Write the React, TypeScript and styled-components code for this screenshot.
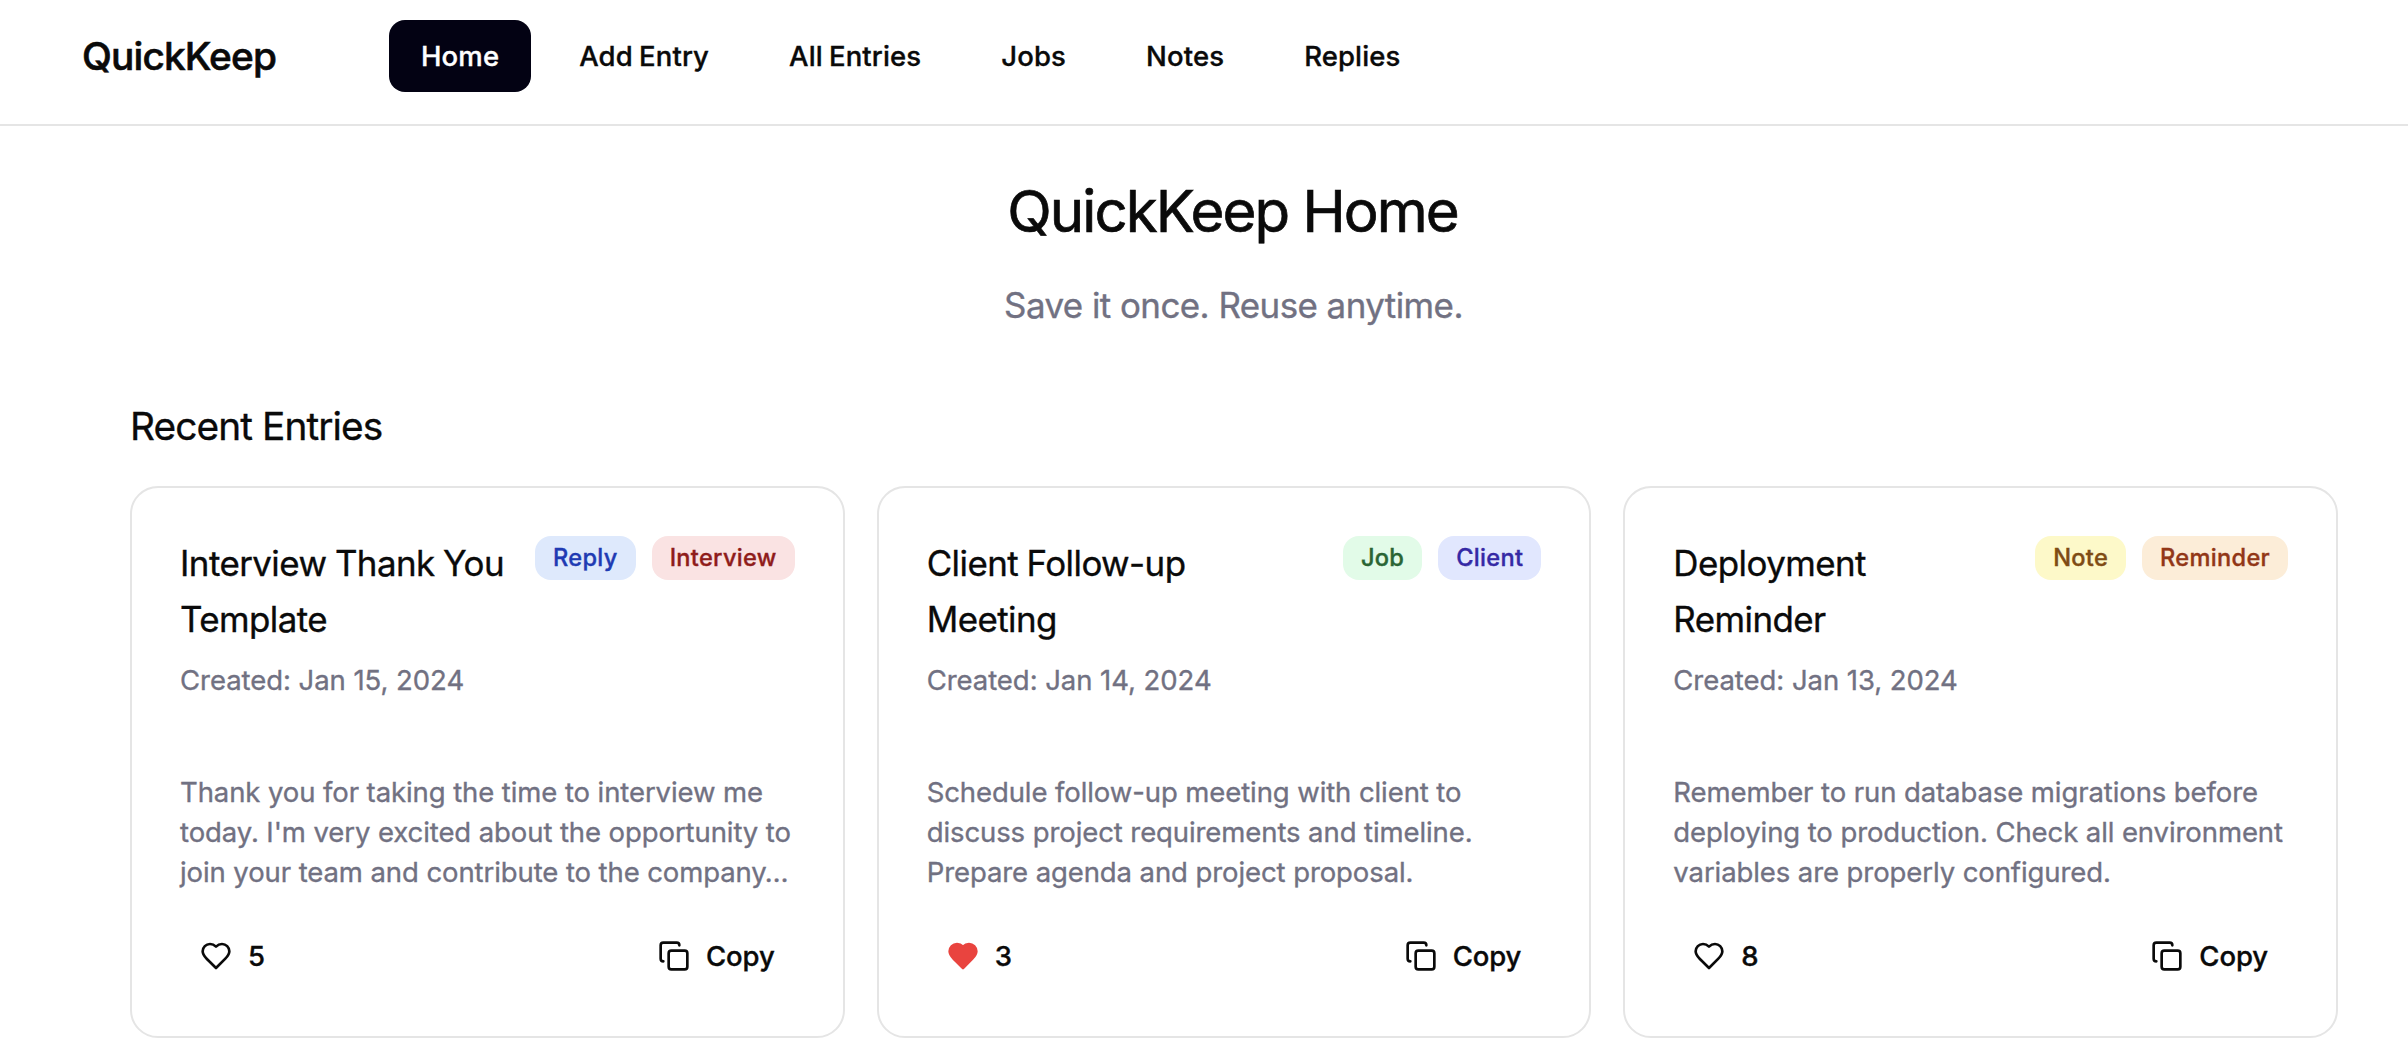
import React from "react";
import styled, { createGlobalStyle } from "styled-components";
import { Copy } from "lucide-react";

const GlobalStyle = createGlobalStyle`
  *, *::before, *::after { box-sizing: border-box; }
  body {
    margin: 0;
    background: #ffffff;
    color: #0a0a0a;
    font-family: Inter, "Liberation Sans", sans-serif;
    font-weight: 400;
    -webkit-text-stroke: 0.35px currentColor;
  }
  h1, h2, h3, p { margin: 0; font-weight: 400; }
  button { font: inherit; color: inherit; border: 0; cursor: pointer; }
`;

const Header = styled.header`
  display: grid;
  grid-template-columns: 307px 1fr;
  align-items: start;
  height: 126px;
  padding: 20px 82px 0;
  border-bottom: 2px solid #e5e5e5;
`;

const Brand = styled.div`
  font-size: 38.8px;
  font-weight: 500;
  line-height: 60px;
  letter-spacing: -0.85px;
  padding-top: 6px;
  -webkit-text-stroke-width: 0.6px;
`;

const Nav = styled.nav`
  display: flex;
  gap: 16px;
`;

const NavButton = styled.button<{ $active?: boolean }>`
  height: 72px;
  padding: 0 32px;
  border-radius: 16px;
  background: ${(p) => (p.$active ? "#030213" : "transparent")};
  color: ${(p) => (p.$active ? "#ffffff" : "#0a0a0a")};
  font-size: 27.5px;
  font-weight: 500;
  line-height: 40px;
  letter-spacing: 0.13px;
  word-spacing: -1.3px;
  white-space: nowrap;
`;

const Main = styled.main`
  padding: 40px 70px 0 130px;
`;

const Hero = styled.section`
  text-align: center;
`;

const PageTitle = styled.h1`
  padding-right: 3px;
  font-size: 58.2px;
  line-height: 90px;
  letter-spacing: -1.95px;
  -webkit-text-stroke-width: 0.7px;
`;

const Tagline = styled.p`
  margin-top: 21px;
  padding-right: 1px;
  font-size: 34.92px;
  line-height: 56px;
  letter-spacing: -0.55px;
  color: #717182;
`;

const SectionTitle = styled.h2`
  margin: 63px 0 30px;
  font-size: 38.8px;
  line-height: 60px;
  letter-spacing: -0.9px;
`;

const Grid = styled.div`
  display: grid;
  grid-template-columns: repeat(3, minmax(0, 1fr));
  gap: 32px;
`;

const Card = styled.article`
  display: flex;
  flex-direction: column;
  height: 552px;
  padding: 48px;
  border: 2px solid #e5e5e5;
  border-radius: 28px;
`;

const CardTop = styled.div`
  display: flex;
  align-items: flex-start;
  gap: 24px;
`;

const CardTitle = styled.h3`
  flex: 1;
  min-width: 0;
  margin-top: -1px;
  font-size: 34.92px;
  line-height: 56px;
  letter-spacing: -0.56px;
  word-spacing: -0.8px;
`;

const Tags = styled.div`
  display: flex;
  flex-shrink: 0;
  gap: 16px;
`;

const Tag = styled.span<{ $bg: string; $fg: string }>`
  height: 44px;
  padding: 6px 18px;
  border-radius: 16px;
  background: ${(p) => p.$bg};
  color: ${(p) => p.$fg};
  font-size: 23.6px;
  font-weight: 500;
  line-height: 32px;
  letter-spacing: 0.3px;
`;

const Created = styled.p`
  margin-top: 13px;
  font-size: 27.5px;
  line-height: 40px;
  letter-spacing: -0.05px;
  color: #717182;
`;

const Body = styled.p`
  margin-top: 72px;
  font-size: 27.5px;
  line-height: 40px;
  letter-spacing: -0.09px;
  color: #717182;
`;

const Actions = styled.div`
  display: flex;
  justify-content: space-between;
  margin-top: auto;
`;

const ActionButton = styled.button`
  display: inline-flex;
  align-items: center;
  gap: 16px;
  height: 64px;
  padding: 0 20px;
  border-radius: 16px;
  background: transparent;
  font-size: 27.5px;
  font-weight: 500;
  line-height: 40px;
  letter-spacing: -0.1px;
`;

const HeartSvg = styled.svg<{ $liked: boolean }>`
  width: 32px;
  height: 32px;
  fill: ${(p) => (p.$liked ? "#e9443f" : "none")};
  stroke: ${(p) => (p.$liked ? "#e9443f" : "currentColor")};
  stroke-width: 2;
  stroke-linecap: round;
  stroke-linejoin: round;
`;

const Heart = ({ liked }: { liked: boolean }) => (
  <HeartSvg viewBox="0 0 24 24" $liked={liked}>
    <path d="M19 14c1.49-1.46 3-3.21 3-5.5A5.5 5.5 0 0 0 16.5 3c-1.76 0-3 .5-4.5 2-1.5-1.5-2.74-2-4.5-2A5.5 5.5 0 0 0 2 8.5c0 2.3 1.5 4.05 3 5.5l7 7Z" />
  </HeartSvg>
);

const navItems = ["Home", "Add Entry", "All Entries", "Jobs", "Notes", "Replies"];

const entries = [
  {
    title: "Interview Thank You Template",
    created: "Jan 15, 2024",
    body: "Thank you for taking the time to interview me today. I'm very excited about the opportunity to join your team and contribute to the company…",
    likes: 5,
    liked: false,
    tags: [
      { label: "Reply", bg: "#dee9fc", fg: "#1f3bb3" },
      { label: "Interview", bg: "#fae3e3", fg: "#8f1c1b" },
    ],
  },
  {
    title: "Client Follow-up Meeting",
    created: "Jan 14, 2024",
    body: "Schedule follow-up meeting with client to discuss project requirements and timeline. Prepare agenda and project proposal.",
    likes: 3,
    liked: true,
    tags: [
      { label: "Job", bg: "#e2fbe8", fg: "#2a6534" },
      { label: "Client", bg: "#e1e7fe", fg: "#3529a5" },
    ],
  },
  {
    title: "Deployment Reminder",
    created: "Jan 13, 2024",
    body: "Remember to run database migrations before deploying to production. Check all environment variables are properly configured.",
    likes: 8,
    liked: false,
    tags: [
      { label: "Note", bg: "#fdf9c9", fg: "#7f4c14" },
      { label: "Reminder", bg: "#fcedd8", fg: "#923717" },
    ],
  },
];

export default function App() {
  return (
    <>
      <GlobalStyle />
      <Header>
        <Brand>QuickKeep</Brand>
        <Nav>
          {navItems.map((item) => (
            <NavButton key={item} $active={item === "Home"}>
              {item}
            </NavButton>
          ))}
        </Nav>
      </Header>
      <Main>
        <Hero>
          <PageTitle>QuickKeep Home</PageTitle>
          <Tagline>Save it once. Reuse anytime.</Tagline>
        </Hero>
        <SectionTitle>Recent Entries</SectionTitle>
        <Grid>
          {entries.map((entry) => (
            <Card key={entry.title}>
              <CardTop>
                <CardTitle>{entry.title}</CardTitle>
                <Tags>
                  {entry.tags.map((tag) => (
                    <Tag key={tag.label} $bg={tag.bg} $fg={tag.fg}>
                      {tag.label}
                    </Tag>
                  ))}
                </Tags>
              </CardTop>
              <Created>Created: {entry.created}</Created>
              <Body>{entry.body}</Body>
              <Actions>
                <ActionButton>
                  <Heart liked={entry.liked} />
                  <span>{entry.likes}</span>
                </ActionButton>
                <ActionButton>
                  <Copy size={32} strokeWidth={2} />
                  <span>Copy</span>
                </ActionButton>
              </Actions>
            </Card>
          ))}
        </Grid>
      </Main>
    </>
  );
}
